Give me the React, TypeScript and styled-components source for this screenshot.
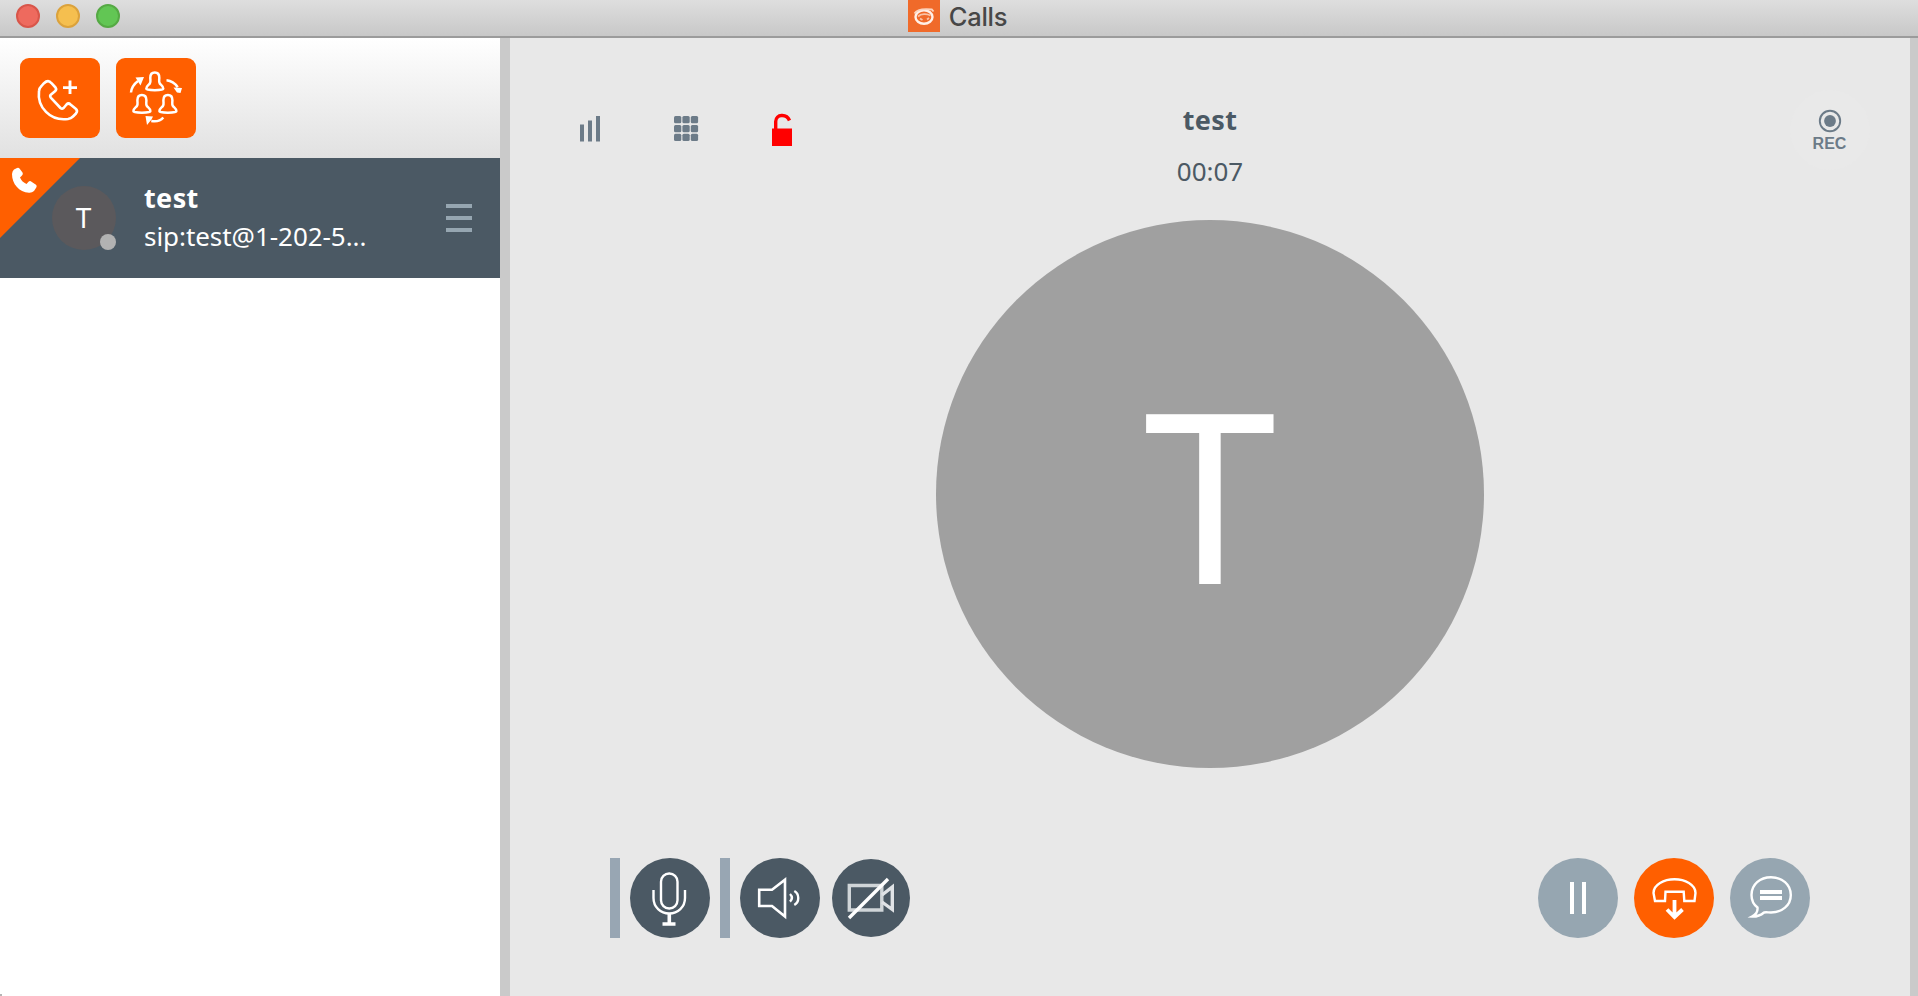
import React from "react";
import styled, { createGlobalStyle, css } from "styled-components";

const color = {
  orange: "#ff5f00",
  slate: "#4b5964",
  mist: "#96a6b1",
  meter: "#98a6b3",
  glyph: "#6c7b88",
  panel: "#e8e8e8",
  divider: "#cacaca",
};

const GlobalStyle = createGlobalStyle`
  * { box-sizing: border-box; }
  body { margin: 0; overflow: hidden; }
`;

const Window = styled.div`
  display: flex;
  flex-direction: column;
  width: 1918px;
  height: 996px;
  background: ${color.panel};
  font-family: "Noto Sans", "Open Sans", sans-serif;
  color: ${color.slate};
  svg { display: block; }
`;

const TitleBar = styled.header`
  display: grid;
  grid-template-columns: 1fr auto 1fr;
  flex: none;
  height: 38px;
  padding: 0 19px 0 16px;
  background: linear-gradient(#dedede, #c8c8c8);
  border-bottom: 2px solid #9b9b9b;
`;

const Lights = styled.div`
  display: flex;
  gap: 16px;
  padding-top: 4px;
`;

const Light = styled.span<{ $fill: string; $edge: string }>`
  width: 24px;
  height: 24px;
  border-radius: 50%;
  background: ${(p) => p.$fill};
  border: 2px solid ${(p) => p.$edge};
`;

const Title = styled.div`
  display: flex;
  gap: 9px;
  height: 32px;
  font: 500 25.5px/33px Inter, sans-serif;
  letter-spacing: -0.3px;
  color: #474747;
`;

const Body = styled.div`
  display: flex;
  flex: 1;
  min-height: 0;
`;

const Sidebar = styled.aside`
  width: 510px;
  background: linear-gradient(#b5b5b5, #b5b5b5) left bottom / 2px 2px no-repeat #fff;
  border-right: 10px solid ${color.divider};
`;

const Toolbar = styled.div`
  display: flex;
  gap: 16px;
  height: 120px;
  padding: 20px;
  background: linear-gradient(#ffffff, #e1e1e1);
`;

const buttonReset = css`
  display: block;
  padding: 0;
  border: 0;
  flex: none;
`;

const ToolButton = styled.button`
  ${buttonReset}
  width: 80px;
  height: 80px;
  border-radius: 9px;
  background: ${color.orange};
`;

const CallRow = styled.div`
  position: relative;
  display: flex;
  align-items: center;
  height: 120px;
  padding: 0 28px 0 52px;
  background: ${color.slate};
  color: #fff;
`;

const ActiveCorner = styled.div`
  position: absolute;
  left: 0;
  top: 0;
`;

const Avatar = styled.div`
  position: relative;
  width: 64px;
  height: 64px;
  padding-right: 1px;
  border-radius: 50%;
  background: #5b595c;
  font-size: 28px;
  line-height: 62px;
  text-align: center;
`;

const Presence = styled.span`
  position: absolute;
  right: 0;
  bottom: 0;
  width: 16px;
  height: 16px;
  border-radius: 50%;
  background: #b2b2b2;
`;

const Contact = styled.div`
  flex: 1;
  padding: 0 0 3px 28px;
  white-space: nowrap;
`;

const ContactName = styled.div`
  font-size: 27px;
  font-weight: 700;
  line-height: 38px;
  letter-spacing: 0.4px;
`;

const ContactAddress = styled.div`
  font-size: 26px;
  line-height: 38px;
  letter-spacing: -0.05px;
`;

const MenuButton = styled.button`
  ${buttonReset}
  display: flex;
  flex-direction: column;
  gap: 8px;
  width: 26px;
  background: none;
`;

const MenuLine = styled.span`
  height: 4px;
  background: ${color.mist};
`;

const CallPanel = styled.main`
  display: flex;
  flex-direction: column;
  justify-content: space-between;
  align-items: center;
  width: 1408px;
  padding-bottom: 58px;
  border-right: 8px solid ${color.divider};
`;

const CallHeader = styled.div`
  display: grid;
  grid-template-columns: 1fr auto 1fr;
  width: 100%;
  height: 182px;
  padding: 52px 40px 0;
`;

const StatusIcons = styled.div`
  display: flex;
  gap: 16px;
`;

const StatusButton = styled.button`
  ${buttonReset}
  width: 80px;
  height: 80px;
  background: none;
`;

const RecordButton = styled(StatusButton)`
  display: flex;
  flex-direction: column;
  align-items: center;
  justify-self: end;
  gap: 1px;
  padding: 19px 1px 0 0;
  border-radius: 50%;
  background: #e9e9e9;
  font: 700 16px/20px "Liberation Sans", sans-serif;
  color: ${color.glyph};
`;

const CallInfo = styled.div`
  text-align: center;
  padding-top: 10px;
`;

const CallName = styled.div`
  font-size: 27px;
  font-weight: 700;
  line-height: 40px;
  letter-spacing: 0.4px;
`;

const Duration = styled.div`
  margin-top: 12px;
  font-size: 26px;
  line-height: 39px;
`;

const BigAvatar = styled.div`
  width: 548px;
  height: 548px;
  border-radius: 50%;
  background: #a0a0a0;
  color: #fff;
  font-size: 238px;
  line-height: 544px;
  text-align: center;
`;

const Controls = styled.div`
  display: flex;
  justify-content: space-between;
  width: 100%;
  height: 80px;
  margin-top: auto;
  padding: 0 100px;
`;

const ControlGroup = styled.div<{ $gap: number }>`
  display: flex;
  gap: ${(p) => p.$gap}px;
`;

const Meter = styled.span`
  width: 10px;
  height: 80px;
  background: ${color.meter};
`;

const RoundButton = styled.button<{ $tone: string; $size?: number }>`
  ${buttonReset}
  width: ${(p) => p.$size ?? 80}px;
  height: ${(p) => p.$size ?? 80}px;
  border-radius: 50%;
  background: ${(p) => p.$tone};
`;

const CameraButton = styled(RoundButton)`
  margin: 1px 0 0 2px;
`;

const Glyph = ({ size = 80, width = 2.4, children }: { size?: number; width?: number; children: React.ReactNode }) => (
  <svg width={size} height={size} viewBox={`0 0 ${size} ${size}`} fill="none" stroke="#fff" strokeWidth={width}>
    {children}
  </svg>
);

const Person = ({ x, y }: { x: number; y: number }) => (
  <path
    transform={`translate(${x} ${y})`}
    d="M9.5 1C6.5 1 5 3 5 6.2 5 9 5.7 10 4.5 12 3.5 13.6 1 14.3 1 17.2 1 18.2 5 18.7 9.5 18.7S18 18.2 18 17.2C18 14.3 15.5 13.6 14.5 12 13.3 10 14 9 14 6.2 14 3 12.5 1 9.5 1Z"
  />
);

export default function App() {
  return (
    <Window>
      <GlobalStyle />
      <TitleBar>
        <Lights>
          <Light $fill="#ee6a5e" $edge="#d8564a" />
          <Light $fill="#f5bf4f" $edge="#dba23c" />
          <Light $fill="#62c654" $edge="#55a944" />
        </Lights>
        <Title>
          <svg width="32" height="32" viewBox="0 0 32 32" fill="none">
            <path d="M0 0h32v32H0z" fill="#f06a2a" />
            <ellipse cx="16" cy="17" rx="8.5" ry="6.8" stroke="#fff0e8" strokeWidth="2.4" />
            <path d="M6.5 13.5C9 9 15 8.500 24 9.500l1.500 2" stroke="#fbd3bd" strokeWidth="1.8" />
            <path d="M10 16.500c3-3 9-3 12.500-1M12 18.500l2.500 1.500M19 19.500l2-1.500" stroke="#f9c3a6" strokeWidth="1.8" />
          </svg>
          Calls
        </Title>
      </TitleBar>
      <Body>
        <Sidebar>
          <Toolbar>
            <ToolButton aria-label="New call">
              <Glyph width={2.6}>
                <path strokeLinejoin="round" d="M24 25.2Q28.3 21 31.5 25.2L35.5 29.5Q37 31.5 35 33.2L30.8 36.8Q29.5 38 31 39.8L40.5 50Q42 51.3 43.6 50L46.5 46.5Q48.5 44.5 50.5 46.5L56 51Q58 53 56 55.5L53 58.5Q51 60.5 48 61C30 63.5 17 49 19 33Q19.3 30 21.5 28Z" />
                <path d="M50 22.5v13.5M43 29.6h14" strokeWidth="2.9" />
              </Glyph>
            </ToolButton>
            <ToolButton aria-label="Conference">
              <Glyph width={2.5}>
                <Person x={29.3} y={13.5} />
                <Person x={16.4} y={36} />
                <Person x={42.4} y={36} />
                <path d="M15 34.5c.5-5 3-8.5 7-11.5M50.5 22.3c5 .5 8.5 3 11.2 7M47.3 59.5c-3 3.5-7 4.5-12 3.5" />
                <path stroke="none" fill="#fff" d="M19.5 19.5l8.5-.5-3.5 8.5zM57.5 29.5l8.5.5-1.5 5-3.5-.5zM29.5 58l7.5.5-1.5 3-4.5 5.5z" />
              </Glyph>
            </ToolButton>
          </Toolbar>
          <CallRow>
            <ActiveCorner>
              <svg width="80" height="80" viewBox="0 0 80 80">
                <path d="M0 0h80L0 80z" fill={color.orange} />
                <path d="M14 11.5l3-1.5q1.5-.8 2.5.5l3 4q1 1.500-.5 3l-2 2q2 4.500 6.500 6.500l2-2.200q1.500-1.500 3 0l4.500 3q1.300 1 .3 2.700L34 33q-2 2-5 1.800C19 34 12 26 12 16q.2-3 2-4.500z" fill="#fff" />
              </svg>
            </ActiveCorner>
            <Avatar>
              T
              <Presence />
            </Avatar>
            <Contact>
              <ContactName>test</ContactName>
              <ContactAddress>sip:test@1-202-5...</ContactAddress>
            </Contact>
            <MenuButton aria-label="Menu">
              <MenuLine />
              <MenuLine />
              <MenuLine />
            </MenuButton>
          </CallRow>
        </Sidebar>
        <CallPanel>
          <CallHeader>
            <StatusIcons>
              <StatusButton aria-label="Quality">
                <svg width="80" height="80" fill={color.glyph}>
                  <path d="M30 34.5h4v17h-4zM38 30.5h4v21h-4zM46 26h4v25.5h-4z" />
                </svg>
              </StatusButton>
              <StatusButton aria-label="Dialpad">
                <svg width="80" height="80" fill={color.glyph}>
                  {[26, 35, 43.8].map((y) =>
                    [28, 36.4, 44.8].map((x) => <rect key={`${x}-${y}`} x={x} y={y} width="7.3" height="7.3" rx="1.5" />)
                  )}
                </svg>
              </StatusButton>
              <StatusButton aria-label="Not encrypted">
                <svg width="80" height="80" fill="none">
                  <path d="M30 38.5h20V56H30z" fill="#f00" />
                  <path d="M33.7 39v-7.500c0-7.500 11-8 13.800-1" stroke="#f00" strokeWidth="3.4" />
                </svg>
              </StatusButton>
            </StatusIcons>
            <CallInfo>
              <CallName>test</CallName>
              <Duration>00:07</Duration>
            </CallInfo>
            <RecordButton>
              <svg width="24" height="24">
                <circle cx="12" cy="12" r="10.2" fill="none" stroke={color.glyph} strokeWidth="1.9" />
                <circle cx="12" cy="12" r="5.9" fill={color.glyph} />
              </svg>
              REC
            </RecordButton>
          </CallHeader>
          <BigAvatar>T</BigAvatar>
          <Controls>
            <ControlGroup $gap={10}>
              <Meter />
              <RoundButton $tone={color.slate} aria-label="Microphone">
                <Glyph>
                  <rect x="31" y="15.5" width="16.5" height="35" rx="8.2" />
                  <path d="M23.5 32v8c0 9 7 15.5 15.7 15.500S55 49 55 40v-8" />
                  <path d="M39.3 55.5V66M32.5 66h13" strokeWidth="3.6" />
                </Glyph>
              </RoundButton>
              <Meter />
              <RoundButton $tone={color.slate} aria-label="Speaker">
                <Glyph>
                  <path d="M19.2 31.7H32L45 21.700V58.500L32 48H19.200Z" strokeWidth="2.6" />
                  <path d="M50 36q3.800 3.800 0 7.700M54.300 33c5.300 3 5.300 11 0 14" />
                </Glyph>
              </RoundButton>
              <CameraButton $tone={color.slate} $size={78} aria-label="Camera off">
                <Glyph size={78} width={3.4}>
                  <path d="M17.3 26.5h32.5v24.5H17.3z" stroke="#d0d5d8" />
                  <path d="M50 36L60.3 28V50.5L50 43" stroke="#e0e3e6" />
                  <path d="M17 59L56 20" />
                </Glyph>
              </CameraButton>
            </ControlGroup>
            <ControlGroup $gap={16}>
              <RoundButton $tone={color.mist} aria-label="Pause">
                <Glyph width={4}>
                  <path d="M34 24v32M46 24v32" />
                </Glyph>
              </RoundButton>
              <RoundButton $tone={color.orange} aria-label="Hang up">
                <Glyph>
                  <path d="M21 43L19.5 35C19.5 26.5 30 21.3 40.5 21.3S61.5 26.5 61.5 35L60.5 43H50.3L49.7 33.8H31.5L31 43Z" />
                  <path d="M40.5 42v17M33 51.5l7.5 7.5 8-7.5" strokeWidth="3.8" />
                </Glyph>
              </RoundButton>
              <RoundButton $tone={color.mist} aria-label="Chat">
                <Glyph>
                  <path d="M27.5 49.5C23.5 46.5 21.5 42 21.5 37 21.5 26.5 30 19.3 41 19.3S60.8 26.5 60.8 37 52 54.5 41 54.5C38 54.5 36 54 34 54.5 30.5 57.5 26.5 58.8 22 58.6 26 56.5 28 54 27.5 49.5Z" />
                  <path d="M30 34h22M30 40h22" strokeWidth="3.8" />
                </Glyph>
              </RoundButton>
            </ControlGroup>
          </Controls>
        </CallPanel>
      </Body>
    </Window>
  );
}
